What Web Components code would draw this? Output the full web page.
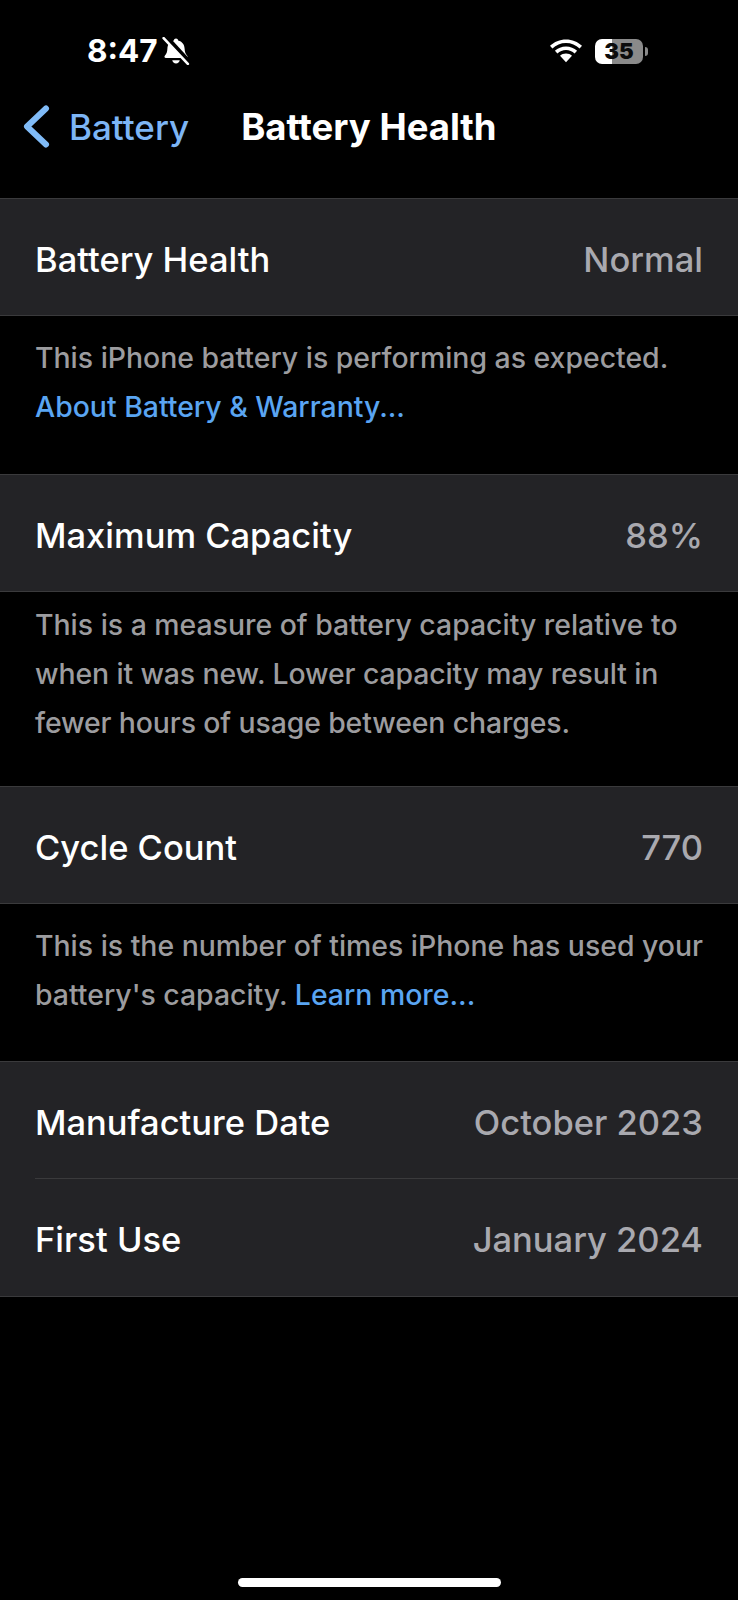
<!DOCTYPE html>
<html>
<head>
<meta charset="utf-8">
<style>
  html, body { margin: 0; padding: 0; background: #000; }
  body { width: 738px; height: 1600px; overflow: hidden; font-family: Inter, "Liberation Sans", sans-serif; }
</style>
</head>
<body>
<status-bar></status-bar>
<nav-bar back="Battery" title="Battery Health"></nav-bar>

<setting-group style="margin-top:25px">
  <setting-row label="Battery Health" value="Normal"></setting-row>
</setting-group>
<group-note style="height:158px;--note-top:17px"><div>This iPhone battery is performing as expected.</div><div><note-link>About Battery &amp; Warranty...</note-link></div></group-note>

<setting-group>
  <setting-row label="Maximum Capacity" value="88%"></setting-row>
</setting-group>
<group-note style="height:194px;--note-top:8px"><div>This is a measure of battery capacity relative to</div><div style="letter-spacing:-.11px">when it was new. Lower capacity may result in</div><div style="letter-spacing:-.11px">fewer hours of usage between charges.</div></group-note>

<setting-group>
  <setting-row label="Cycle Count" value="770"></setting-row>
</setting-group>
<group-note style="height:157px;--note-top:17px"><div>This is the number of times iPhone has used your</div><div>battery's capacity. <note-link>Learn more...</note-link></div></group-note>

<setting-group>
  <setting-row label="Manufacture Date" value="October 2023"></setting-row>
  <setting-row label="First Use" value="January 2024" divided></setting-row>
</setting-group>

<home-indicator></home-indicator>

<script>
class StatusBar extends HTMLElement {
  constructor() {
    super();
    this.attachShadow({ mode: 'open' }).innerHTML = `
      <style>
        :host { display: flex; align-items: center; justify-content: space-between; height: 50px; padding: 26px 90px 0 87px; color: #fff; }
        .left, .right { display: flex; align-items: center; }
        .time { font: 700 31.5px Inter, "Liberation Sans", sans-serif; margin-bottom: 2px; }
        .left svg { margin-left: 4px; }
        .batt { position: relative; width: 48px; height: 25px; margin-left: 12px; border-radius: 7px; overflow: hidden;
          background: linear-gradient(90deg, #fff 0 35%, #8a8a8a 35% 100%);
          color: #0c0c0c; font: 900 22px/25px Inter, "Liberation Sans", sans-serif; text-align: center; }
        .cap { width: 3px; height: 9px; margin-left: 2px; border-radius: 0 3px 3px 0; background: #8a8a8a; }
      </style>
      <div class="left">
        <span class="time">8:47</span>
        <svg width="28" height="28" viewBox="0 0 26 26" fill="#fff">
          <path d="M13 1.500c1.100 0 1.900.7 2 1.800 3.700.9 5.900 3.700 6 7.700.1 2.700.8 4.800 2.400 6.500.7.900.2 2-1 2H3.600c-1.200 0-1.700-1.100-1-2C4.200 15.800 4.900 13.700 5 11c.1-4 2.300-6.800 6-7.700.1-1.100.9-1.800 2-1.800z"/>
          <path d="M9.500 21.500h7c-.3 1.700-1.700 3-3.500 3s-3.200-1.300-3.500-3z"/>
          <path d="M2.500 -1 26 24.500" stroke="#000" stroke-width="5"/>
          <path d="M1.500 1 24 25" stroke="#fff" stroke-width="2.400" stroke-linecap="round"/>
        </svg>
      </div>
      <div class="right">
        <svg width="34" height="25" viewBox="0 0 34 25" fill="#fff">
          <path d="M17 4c5.200 0 10 2 13.600 5.500l2.400-2.700C28.800 2.800 23.200.500 17 .500S5.200 2.800 1 6.800l2.400 2.700C7 6 11.800 4 17 4z"/>
          <path d="M17 11c3.300 0 6.300 1.300 8.600 3.400l2.500-2.700C25.200 9 21.300 7.400 17 7.400S8.800 9 5.900 11.700l2.500 2.700C10.700 12.300 13.700 11 17 11z"/>
          <path d="M17 14.400c-2.400 0-4.400.9-6 2.300l6 6.500 6-6.500c-1.600-1.400-3.600-2.300-6-2.300z"/>
        </svg>
        <div class="batt">35</div>
        <div class="cap"></div>
      </div>`;
  }
}

class NavBar extends HTMLElement {
  constructor() {
    super();
    this.attachShadow({ mode: 'open' }).innerHTML = `
      <style>
        :host { display: flex; align-items: center; height: 97px; padding-top: 4px; box-sizing: border-box; }
        .back { display: flex; align-items: center; color: #7db5f5; font: 500 35px Inter, "Liberation Sans", sans-serif; padding-left: 23px; }
        .back svg { margin-right: 19px; }
        .title { color: #fff; font: 700 36.5px Inter, "Liberation Sans", sans-serif; margin-left: 52px; }
      </style>
      <div class="back">
        <svg width="27" height="43" viewBox="0 0 27 43" fill="none" stroke="#80bbf7" stroke-width="6" stroke-linecap="round" stroke-linejoin="round"><path d="M23 3.500 4 21.500l19 18"/></svg>
        <span>${this.getAttribute('back')}</span>
      </div>
      <div class="title">${this.getAttribute('title')}</div>`;
  }
}

class SettingGroup extends HTMLElement {
  constructor() {
    super();
    this.attachShadow({ mode: 'open' }).innerHTML = `
      <style>
        :host { display: block; background: #232326; border-top: 1px solid #3a3a3c; border-bottom: 1px solid #3a3a3c; }
      </style>
      <slot></slot>`;
  }
}

class SettingRow extends HTMLElement {
  constructor() {
    super();
    this.attachShadow({ mode: 'open' }).innerHTML = `
      <style>
        :host { display: block; padding-left: 35px; }
        .row { display: flex; align-items: center; justify-content: space-between; box-sizing: border-box; height: 116px; padding: 4px 35px 0 0;
          font: 500 34.5px Inter, "Liberation Sans", sans-serif; }
        :host([divided]) .row { height: 118px; border-top: 1px solid #3a3a3c; }
        .label { color: #fff; }
        .value { color: #a9a9af; }
      </style>
      <div class="row">
        <span class="label">${this.getAttribute('label')}</span>
        <span class="value">${this.getAttribute('value')}</span>
      </div>`;
  }
}

class GroupNote extends HTMLElement {
  constructor() {
    super();
    this.attachShadow({ mode: 'open' }).innerHTML = `
      <style>
        :host { display: block; box-sizing: border-box; padding: var(--note-top, 16px) 20px 0 35px; color: #9c9c9f;
          font: 500 28.4px/49px Inter, "Liberation Sans", sans-serif; white-space: nowrap; }
      </style>
      <slot></slot>`;
  }
}

class NoteLink extends HTMLElement {
  constructor() {
    super();
    this.attachShadow({ mode: 'open' }).innerHTML = `
      <style>
        :host { color: #5aa5f2; }
      </style>
      <slot></slot>`;
  }
}

class HomeIndicator extends HTMLElement {
  constructor() {
    super();
    this.attachShadow({ mode: 'open' }).innerHTML = `
      <style>
        :host { position: absolute; left: 238px; top: 1578px; width: 263px; height: 9px; border-radius: 5px; background: #fff; }
      </style>`;
  }
}

customElements.define('status-bar', StatusBar);
customElements.define('nav-bar', NavBar);
customElements.define('setting-group', SettingGroup);
customElements.define('setting-row', SettingRow);
customElements.define('group-note', GroupNote);
customElements.define('note-link', NoteLink);
customElements.define('home-indicator', HomeIndicator);
</script>
</body>
</html>
